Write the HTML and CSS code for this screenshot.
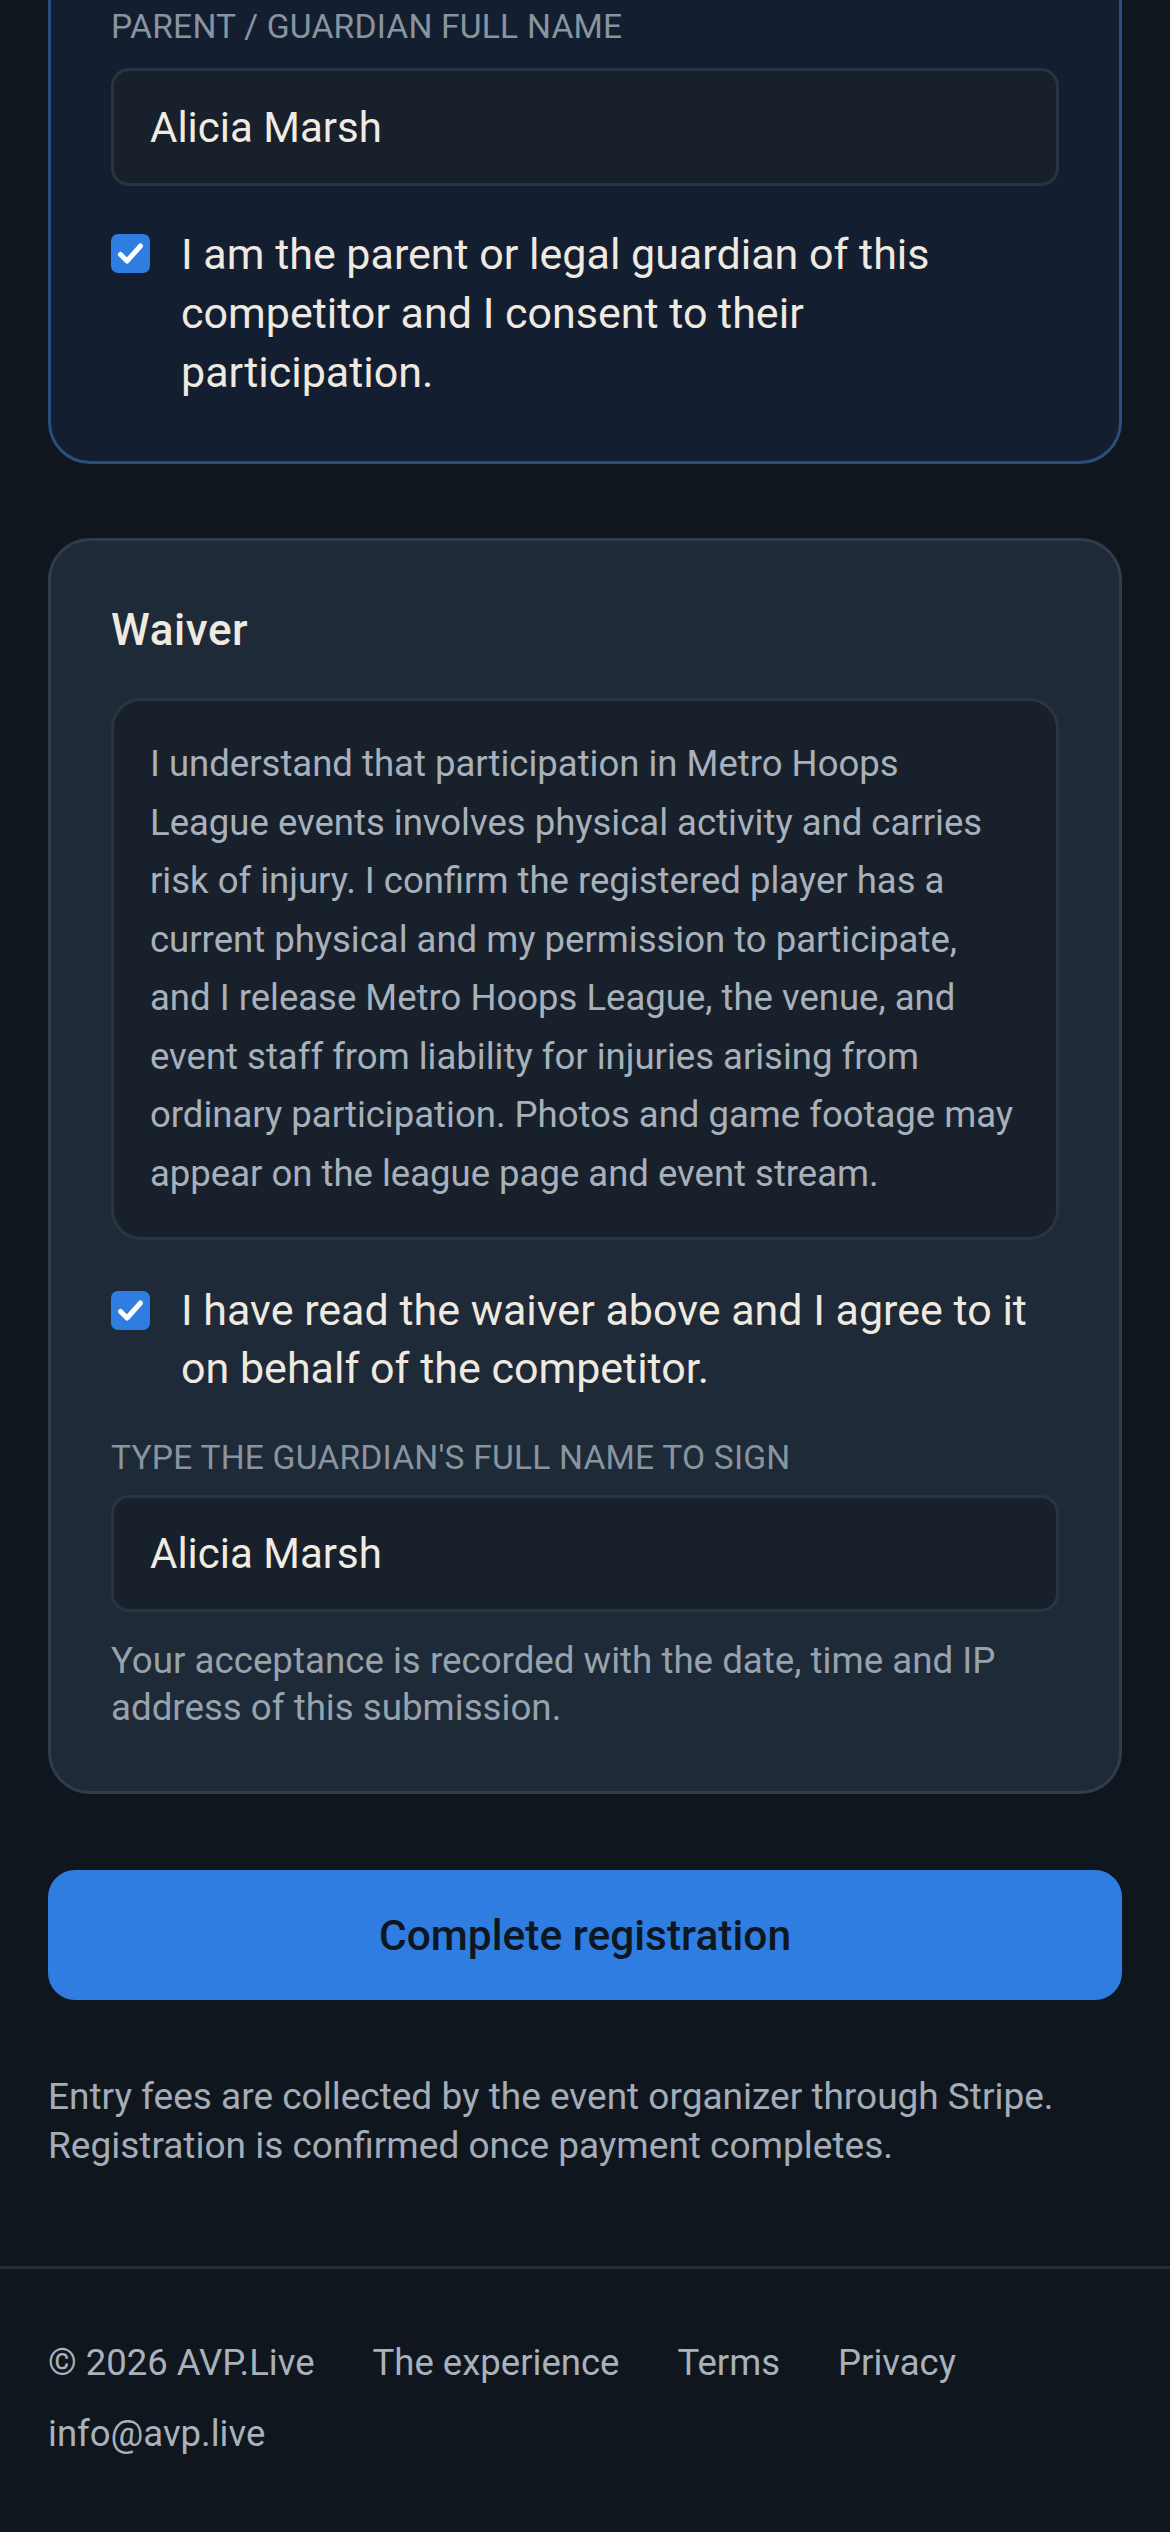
FILE: index.html
```html
<!DOCTYPE html>
<html lang="en">
<head>
<meta charset="utf-8">
<title>Registration</title>
<link rel="stylesheet" href="styles.css">
</head>
<body>
<main class="page">
  <section class="card card-guardian">
    <label class="field-label">Parent / Guardian full name</label>
    <div class="input">Alicia Marsh</div>
    <div class="check-row">
      <span class="checkbox"><svg viewBox="0 0 39 39" width="39" height="39"><path d="M9.5 20.5 L16 27 L29.5 12" fill="none" stroke="#fff" stroke-width="5" stroke-linecap="round" stroke-linejoin="round"/></svg></span>
      <span class="check-text">I am the parent or legal guardian of this competitor and I consent to their participation.</span>
    </div>
  </section>

  <section class="card card-waiver">
    <h2 class="card-title">Waiver</h2>
    <div class="waiver-box">I understand that participation in Metro Hoops League events involves physical activity and carries risk of injury. I confirm the registered player has a current physical and my permission to participate, and I release Metro Hoops League, the venue, and event staff from liability for injuries arising from ordinary participation. Photos and game footage may appear on the league page and event stream.</div>
    <div class="check-row check-row-waiver">
      <span class="checkbox"><svg viewBox="0 0 39 39" width="39" height="39"><path d="M9.5 20.5 L16 27 L29.5 12" fill="none" stroke="#fff" stroke-width="5" stroke-linecap="round" stroke-linejoin="round"/></svg></span>
      <span class="check-text">I have read the waiver above and I agree to it on behalf of the competitor.</span>
    </div>
    <label class="field-label field-label-sign">Type the guardian's full name to sign</label>
    <div class="input input-sign">Alicia Marsh</div>
    <p class="helper">Your acceptance is recorded with the date, time and IP address of this submission.</p>
  </section>

  <button class="submit" type="button">Complete registration</button>

  <p class="note">Entry fees are collected by the event organizer through Stripe. Registration is confirmed once payment completes.</p>
</main>

<footer class="footer">
  <nav class="footer-links">
    <span>© 2026 AVP.Live</span>
    <a href="#">The experience</a>
    <a href="#">Terms</a>
    <a href="#">Privacy</a>
    <a href="#">info@avp.live</a>
  </nav>
</footer>
</body>
</html>
```

FILE: styles.css
```css
* { box-sizing: border-box; }

html, body {
  margin: 0;
  padding: 0;
  background: #10161e;
}

body {
  font-family: Roboto, "Liberation Sans", sans-serif;
  color: #eee8df;
  overflow: hidden;
}

.page {
  padding: 0 48px;
  display: flex;
  flex-direction: column;
}

.card {
  border-radius: 42px;
  padding: 60px;
  display: flex;
  flex-direction: column;
}

.card-guardian {
  margin-top: -57px;
  background: #131f31;
  border: 3px solid #284f7e;
  padding-bottom: 59px;
}

.card-waiver {
  margin-top: 74px;
  background: #1e2a37;
  border: 3px solid #2f3c49;
}

.field-label {
  display: block;
  font-size: 33.6px;
  line-height: 42px;
  text-transform: uppercase;
  color: #8a949f;
  letter-spacing: 0.2px;
}

.input {
  margin-top: 20px;
  height: 118px;
  display: flex;
  align-items: center;
  padding: 0 36px;
  background: #18212b;
  border: 3px solid #2a3440;
  border-radius: 18px;
  font-size: 42px;
  color: #f0ebe3;
}

.input-sign {
  margin-top: 16px;
  height: 117px;
}

.check-row {
  margin-top: 39px;
  display: flex;
  align-items: flex-start;
  gap: 31px;
}

.checkbox {
  flex: none;
  width: 39px;
  height: 39px;
  margin-top: 9px;
  border-radius: 7px;
  background: #2f7de1;
  display: flex;
}

.checkbox svg { display: block; }

.check-text {
  font-size: 43px;
  line-height: 59px;
  color: #efe9e0;
}

.card-title {
  margin: 0;
  font-size: 44px;
  line-height: 58px;
  font-weight: 500;
  letter-spacing: 0.6px;
  color: #efe9e0;
}

.waiver-box {
  margin-top: 39px;
  padding: 34px 36px;
  background: #18212b;
  border: 3px solid #2a3541;
  border-radius: 30px;
  font-size: 36.5px;
  line-height: 58.5px;
  color: #a8b1bb;
}

.check-row-waiver {
  margin-top: 41px;
}

.check-row-waiver .checkbox { margin-top: 10px; }

.check-row-waiver .check-text { line-height: 58px; }

.field-label-sign {
  margin-top: 40px;
}

.helper {
  margin: 25px 0 0;
  font-size: 36.7px;
  line-height: 47px;
  color: #98a2ad;
}

.submit {
  margin-top: 76px;
  height: 130px;
  width: 100%;
  border: none;
  border-radius: 27px;
  background: #2f7de1;
  color: #0e1620;
  font-family: inherit;
  font-size: 42.5px;
  font-weight: 500;
}

.note {
  margin: 72px 0 0;
  font-size: 37px;
  line-height: 49px;
  color: #a4adb7;
}

.footer {
  margin-top: 96px;
  border-top: 3px solid #262e38;
  padding: 70px 48px 80px;
}

.footer-links {
  display: flex;
  flex-wrap: wrap;
  column-gap: 58px;
  row-gap: 23px;
  font-size: 36.5px;
  line-height: 48px;
  color: #a9b1ba;
}

.footer-links a {
  color: inherit;
  text-decoration: none;
}
```
